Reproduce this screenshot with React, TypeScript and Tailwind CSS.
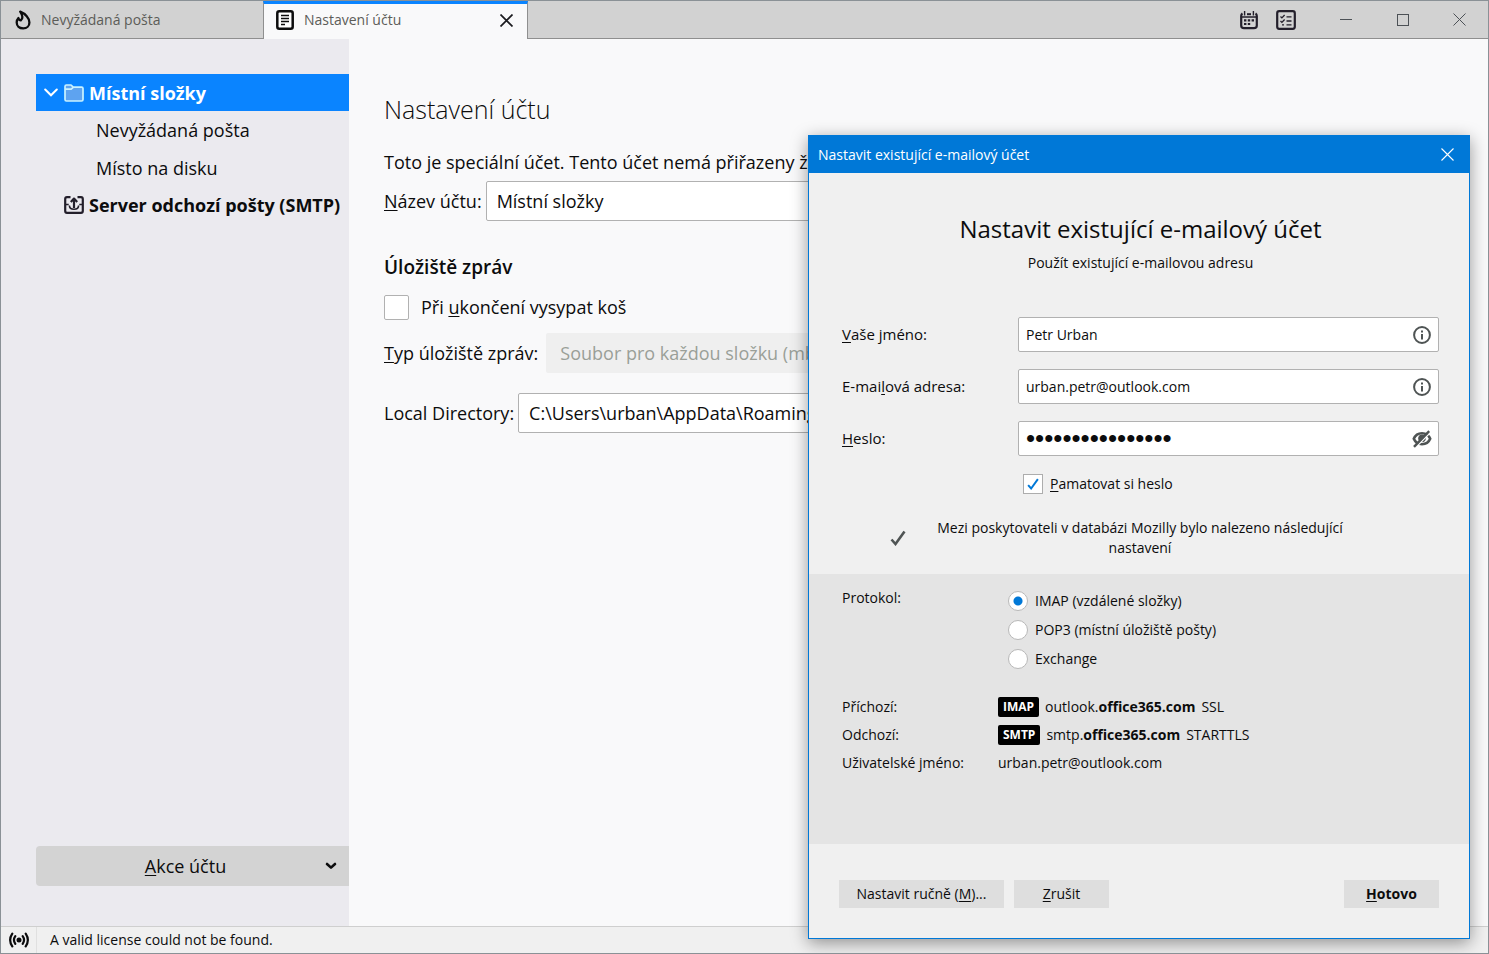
import { useState } from "react";
import type { ReactNode } from "react";

function FlameIcon() {
  return (
    <svg width="16" height="20" viewBox="0 0 16 20" fill="none" stroke="#0c0c0d" strokeWidth="2.3" strokeLinejoin="round" strokeLinecap="round">
      <path d="M5.2 1.6C10.4 3.6 14.4 8.2 14.4 12.4C14.4 16 11.8 18.4 8.2 18.4C4.4 18.4 1.7 16 1.7 12.6C1.700 10.600 2.400 9 3.400 8C3.800 9.400 4.600 10.400 5.800 10.400C8.200 8.400 7.200 4.600 5.200 1.600Z" />
    </svg>
  );
}

function DocumentIcon() {
  return (
    <svg width="18" height="20" viewBox="0 0 18 20" fill="none" stroke="#0c0c0d">
      <rect x="1.3" y="1.3" width="15.400" height="17.400" rx="2" strokeWidth="2.500" fill="#fff" />
      <path d="M5 5.500h8M5 8.500h8M5 11.500h8M5 14.500h4" strokeWidth="1.300" />
    </svg>
  );
}

function CalendarIcon() {
  return (
    <svg width="18" height="20" viewBox="0 0 18 20" fill="none" stroke="#231f2b">
      <path d="M2.5 3.5C1.6 4 1.2 4.8 1.2 6V15.5C1.2 17.5 2.2 18.2 4 18.2H14C15.8 18.2 16.8 17.5 16.8 15.5V6C16.8 4.8 16.4 4 15.5 3.5" strokeWidth="2.2" />
      <path d="M4.6 1v4.6M13.4 1v4.6M2 7h14" strokeWidth="1.4" />
      <path d="M7 4.2h4" strokeWidth="2" />
      <path d="M4 10.4h2.4M7.8 10.4h2.4M11.6 10.4h2.4M4 14h2.4M7.8 14h2.4" strokeWidth="2.2" />
    </svg>
  );
}

function TasksIcon() {
  return (
    <svg width="20" height="20" viewBox="0 0 20 20" fill="none" stroke="#231f2b">
      <rect x="1.2" y="1.2" width="17.6" height="17.6" rx="2" strokeWidth="2.2" />
      <path d="M4.5 6.5l1.4 1.4L8.6 5M4.5 11l1.4 1.4 2.7-2.9M6 14.8h2" strokeWidth="1.3" />
      <path d="M10.5 6.8h5M10.5 11h5M10.5 14.8h5" strokeWidth="1.3" />
    </svg>
  );
}

function CrossIcon({ size, weight }: { size: number; weight: number }) {
  return (
    <svg width={size} height={size} viewBox="0 0 13 13" fill="none" stroke="currentColor" strokeWidth={weight}>
      <path d="M.5.5l12 12M12.5.5l-12 12" />
    </svg>
  );
}

function FolderIcon() {
  return (
    <svg width="20" height="18" viewBox="0 0 20 18" fill="#5ea3f0" stroke="#c9f2ff" strokeWidth="1.7" strokeLinejoin="round">
      <path d="M1 15.5V2.4C1 1.5 1.5 1 2.4 1H7l2.2 2.2h8.4c.9 0 1.4.5 1.4 1.4v10.9c0 .9-.5 1.5-1.4 1.5H2.4C1.5 17 1 16.4 1 15.5Z" />
      <path d="M1 5.2h6.2L9.2 3.4" fill="none" />
    </svg>
  );
}

function OutgoingIcon() {
  return (
    <svg width="20" height="18" viewBox="0 0 20 18" fill="none" stroke="#231f2b" strokeWidth="2.2" strokeLinejoin="round">
      <path d="M6.5 1.2H3C1.8 1.2 1.2 1.8 1.2 3v12c0 1.2.6 1.8 1.8 1.8h14c1.2 0 1.8-.6 1.8-1.8V3c0-1.2-.6-1.8-1.8-1.8h-3.5" />
      <path d="M1.5 8.5h3.2M15.3 8.5h3.2M5.4 9.5c0 5 9.2 5 9.2 0" strokeWidth="1.6" />
      <path d="M10 12V3M6.8 6L10 2.6L13.2 6" />
    </svg>
  );
}

function InfoIcon() {
  return (
    <svg width="18" height="18" viewBox="0 0 18 18" fill="none" stroke="#4f5454">
      <circle cx="9" cy="9" r="7.9" strokeWidth="2" />
      <path d="M9 4.4v2M9 7.9v5.6" strokeWidth="2" />
    </svg>
  );
}

function HiddenEyeIcon() {
  return (
    <svg width="20" height="18" viewBox="0 0 20 18" fill="none" stroke="#4f5454" className="shrink-0">
      <path d="M1.8 8.8C3.4 4.8 6.300 3.200 10 3.200s6.600 1.600 8.200 5.600C16.600 12.600 13.700 14.200 10 14.200S3.400 12.600 1.800 8.800Z" strokeWidth="2.6" />
      <circle cx="10" cy="8.400" r="3.400" fill="#4f5454" />
      <path d="M3.600 17.400L18.600 2.200" stroke="#fff" strokeWidth="1.500" />
      <path d="M2 16.800L17.200 1.200" strokeWidth="2.400" />
    </svg>
  );
}

function SignalIcon() {
  return (
    <svg width="20" height="16" viewBox="0 0 20 16" fill="none" stroke="#0c0c0d" strokeWidth="2.2" strokeLinecap="round">
      <circle cx="10" cy="8" r="2.5" fill="#0c0c0d" stroke="none" />
      <path d="M6.3 4.2c-1.7 2.4-1.7 5.2 0 7.6M13.7 4.2c1.7 2.4 1.7 5.2 0 7.6M3.3 1.6c-2.7 4-2.7 8.8 0 12.8M16.7 1.6c2.7 4 2.7 8.8 0 12.8" />
    </svg>
  );
}

function Tick({ className }: { className: string }) {
  return (
    <svg viewBox="0 0 16 16" fill="none" stroke="currentColor" strokeWidth="2.600" className={className}>
      <path d="M1.5 9.500l4 4.500L14.500 1.500" />
    </svg>
  );
}

function TitleBar() {
  return (
    <header className="flex h-[38px] shrink-0 bg-[#d2d2d2] text-sm text-[#5c5c58]">
      <button className="flex w-[262px] items-center gap-2.5 border-b border-[#8f8f8f] pl-3.5">
        <FlameIcon />
        Nevyžádaná pošta
      </button>
      <div className="flex w-[265px] items-center border-x border-t-3 border-x-[#8f8f8f] border-t-[#0a84ff] bg-[#f9f9fa] pr-3.5 pb-[3px] pl-3">
        <DocumentIcon />
        <button className="ml-2.5 flex-1 text-left">Nastavení účtu</button>
        <button aria-label="Zavřít panel" className="text-[#1b1b1f]">
          <CrossIcon size={13} weight={1.7} />
        </button>
      </div>
      <div className="flex flex-1 items-center justify-end border-b border-[#8f8f8f] pr-[22px] text-[#4c5156]">
        <button aria-label="Kalendář" className="mr-[18px]"><CalendarIcon /></button>
        <button aria-label="Úkoly" className="mr-11"><TasksIcon /></button>
        <button aria-label="Minimalizovat" className="mr-[45px] flex h-3 w-3 items-center">
          <span className="h-px w-full bg-current" />
        </button>
        <button aria-label="Maximalizovat" className="mr-11 h-3 w-3 border border-current" />
        <button aria-label="Zavřít"><CrossIcon size={13} weight={1} /></button>
      </div>
    </header>
  );
}

function Sidebar() {
  return (
    <aside className="flex w-[348px] shrink-0 flex-col justify-between bg-[#ebeaef] pt-[35px] pb-10 pl-[35px] text-lg text-[#0c0c0d]">
      <nav className="flex flex-col gap-px whitespace-nowrap">
        <a href="#mistni" className="flex h-[37px] items-center bg-[#0a84ff] pl-2 font-bold text-white">
          <svg width="14" height="9" viewBox="0 0 14 9" fill="none" stroke="currentColor" strokeWidth="2" strokeLinecap="round" className="mr-1.5">
            <path d="M1.2 1.5L7 7.3l5.8-5.8" />
          </svg>
          <FolderIcon />
          <span className="ml-[5px]">Místní složky</span>
        </a>
        <a href="#nevyzadana" className="flex h-9 items-center pl-[60px]">Nevyžádaná pošta</a>
        <a href="#disk" className="flex h-[37px] items-center pl-[60px]">Místo na disku</a>
        <a href="#smtp" className="flex h-9 items-center gap-[5px] pl-7 font-bold">
          <OutgoingIcon />
          Server odchozí pošty (SMTP)
        </a>
      </nav>
      <button className="flex h-10 items-center rounded-l-sm bg-[#d3d3d3] pr-3 pl-2.5">
        <span className="flex-1"><u>A</u>kce účtu</span>
        <svg width="12" height="8" viewBox="0 0 12 8" fill="none" stroke="currentColor" strokeWidth="2.6" strokeLinecap="round" strokeLinejoin="round">
          <path d="M2 2l4 3.6L10 2" />
        </svg>
      </button>
    </aside>
  );
}

function Settings() {
  return (
    <main className="min-w-0 flex-1 overflow-hidden bg-[#f9f9fa] pt-[50px] pr-10 pl-[35px] text-lg whitespace-nowrap text-[#0c0c0d]">
      <h1 className="text-[25px] leading-10 font-light">Nastavení účtu</h1>
      <p className="mt-[17px] leading-8">Toto je speciální účet. Tento účet nemá přiřazeny žá</p>
      <div className="mt-[3px] flex items-center gap-1">
        <label htmlFor="account"><u>N</u>ázev účtu:</label>
        <input id="account" defaultValue="Místní složky" className="h-10 min-w-0 flex-1 rounded-xs border border-[#b1b1b1] bg-white px-2.5" />
      </div>
      <h2 className="mt-[30px] text-[19px] leading-8 font-semibold">Úložiště zpráv</h2>
      <div className="mt-2.5 flex items-center gap-3">
        <input id="trash" type="checkbox" className="h-[25px] w-[25px] appearance-none rounded-xs border border-[#b1b1b1] bg-white" />
        <label htmlFor="trash">Při <u>u</u>končení vysypat koš</label>
      </div>
      <div className="mt-3 flex items-center gap-2">
        <label htmlFor="store"><u>T</u>yp úložiště zpráv:</label>
        <select id="store" disabled className="h-10 w-[390px] appearance-none rounded-xs bg-[#efefef] px-3.5 text-[#9a9f98] opacity-100">
          <option>Soubor pro každou složku (mbox)</option>
        </select>
      </div>
      <div className="mt-5 flex items-center gap-1">
        <label htmlFor="dir">Local Directory:</label>
        <input id="dir" readOnly defaultValue="C:\Users\urban\AppData\Roaming\Thunderbird" className="h-10 min-w-0 flex-1 rounded-xs border border-[#b1b1b1] bg-white px-2.5" />
      </div>
    </main>
  );
}

function Field({ id, label, type = "text", value, icon }: { id: string; label: ReactNode; type?: string; value: string; icon: ReactNode }) {
  return (
    <div className="flex items-center">
      <label htmlFor={id} className="w-44 text-[15px]">{label}</label>
      <div className="flex h-[35px] flex-1 items-center rounded-xs border border-[#b1b1b1] bg-white px-[7px]">
        <input
          id={id}
          type={type}
          defaultValue={value}
          className={type === "password" ? "h-full min-w-0 flex-1 font-['Liberation_Sans',sans-serif] text-[26px] outline-none" : "h-full min-w-0 flex-1 outline-none"}
        />
        <span className="flex w-[18px] justify-center">{icon}</span>
      </div>
    </div>
  );
}

const protocols = ["IMAP (vzdálené složky)", "POP3 (místní úložiště pošty)", "Exchange"];

function Server({ kind, host, security }: { kind: string; host: string; security: string }) {
  return (
    <span className="flex items-center">
      <span className="mr-1.5 flex h-5 items-center rounded-xs bg-black px-[5px] text-xs font-bold text-white">{kind}</span>
      {host}.<b>office365.com</b>
      <span className="ml-1.5">{security}</span>
    </span>
  );
}

function AccountDialog() {
  const [protocol, setProtocol] = useState(protocols[0]);
  return (
    <div role="dialog" aria-labelledby="dialog-title" className="absolute top-[134px] right-[18px] w-[662px] border border-[#0078d7] bg-[#f0f0f0] text-sm text-[#0c0c0d] shadow-[0_4px_16px_rgba(0,0,0,0.4)]">
      <div className="flex h-[37px] items-center justify-between bg-[#0078d7] pr-[15px] pl-[9px] text-white">
        <span>Nastavit existující e-mailový účet</span>
        <button aria-label="Zavřít dialog"><CrossIcon size={13} weight={1.1} /></button>
      </div>
      <div className="flex flex-col pt-9 pr-[30px] pb-4 pl-[33px]">
        <div className="text-center">
          <h2 id="dialog-title" className="text-2xl leading-10">Nastavit existující e-mailový účet</h2>
          <p className="mt-1 leading-5">Použít existující e-mailovou adresu</p>
        </div>
        <div className="mt-11 flex flex-col gap-[17px]">
          <Field id="name" label={<><u>V</u>aše jméno:</>} value="Petr Urban" icon={<InfoIcon />} />
          <Field id="mail" label={<>E-mai<u>l</u>ová adresa:</>} value="urban.petr@outlook.com" icon={<InfoIcon />} />
          <Field id="password" type="password" label={<><u>H</u>eslo:</>} value="abcdefghijklmnop" icon={<HiddenEyeIcon />} />
        </div>
        <div className="mt-[18px] ml-[181px] flex items-center gap-[7px]">
          <span className="grid h-5 w-5">
            <input id="remember" type="checkbox" defaultChecked className="peer col-start-1 row-start-1 appearance-none border border-[#adadad] bg-white" />
            <Tick className="pointer-events-none invisible col-start-1 row-start-1 h-3 w-3 place-self-center text-[#0078d7] peer-checked:visible" />
          </span>
          <label htmlFor="remember"><u>P</u>amatovat si heslo</label>
        </div>
        <div className="mt-6 flex items-center pl-12">
          <Tick className="h-4 w-4 text-[#4f5454]" />
          <p className="ml-6 w-[420px] text-center leading-5">Mezi poskytovateli v databázi Mozilly bylo nalezeno následující nastavení</p>
        </div>
      </div>
      <div className="h-[270px] bg-[#e4e4e4] pt-3 pl-[33px]">
        <fieldset className="flex">
          <legend className="float-left w-[166px] pt-0.5">Protokol:</legend>
          <div className="flex flex-col gap-[9px] pt-[5px]">
            {protocols.map((name) => (
              <label key={name} className="flex h-5 items-center gap-[7px]">
                <input
                  type="radio"
                  name="protocol"
                  checked={protocol === name}
                  onChange={() => setProtocol(name)}
                  className="h-5 w-5 appearance-none rounded-full border border-[#b8b8b8] bg-white checked:bg-[radial-gradient(circle,#0078d7_4px,#fff_5px)]"
                />
                {name}
              </label>
            ))}
          </div>
        </fieldset>
        <dl className="mt-6 grid grid-cols-[156px_1fr] items-center leading-7">
          <dt>Příchozí:</dt>
          <dd><Server kind="IMAP" host="outlook" security="SSL" /></dd>
          <dt>Odchozí:</dt>
          <dd><Server kind="SMTP" host="smtp" security="STARTTLS" /></dd>
          <dt>Uživatelské jméno:</dt>
          <dd>urban.petr@outlook.com</dd>
        </dl>
      </div>
      <div className="flex gap-2.5 p-[30px] pt-9">
        <button className="h-7 w-[165px] bg-[#dedede]">Nastavit ručně (<u>M</u>)...</button>
        <button className="h-7 w-[95px] bg-[#dedede]"><u>Z</u>rušit</button>
        <button className="ml-auto h-7 w-[95px] bg-[#dedede] font-bold"><u>H</u>otovo</button>
      </div>
    </div>
  );
}

export default function App() {
  return (
    <div className="relative flex h-screen min-h-[940px] flex-col overflow-hidden border border-[#8a9196] font-['Open_Sans','Noto_Sans',sans-serif] [&_u]:underline-offset-2">
      <TitleBar />
      <div className="flex min-h-0 flex-1">
        <Sidebar />
        <Settings />
      </div>
      <footer className="flex h-[27px] shrink-0 items-center border-t border-[#cfcfcf] bg-[#f0f0f0] text-sm text-[#0c0c0d]">
        <span className="flex h-full w-9 items-center justify-center border-r border-[#e0e0e0]"><SignalIcon /></span>
        <span className="pl-[13px]">A valid license could not be found.</span>
      </footer>
      <AccountDialog />
    </div>
  );
}
